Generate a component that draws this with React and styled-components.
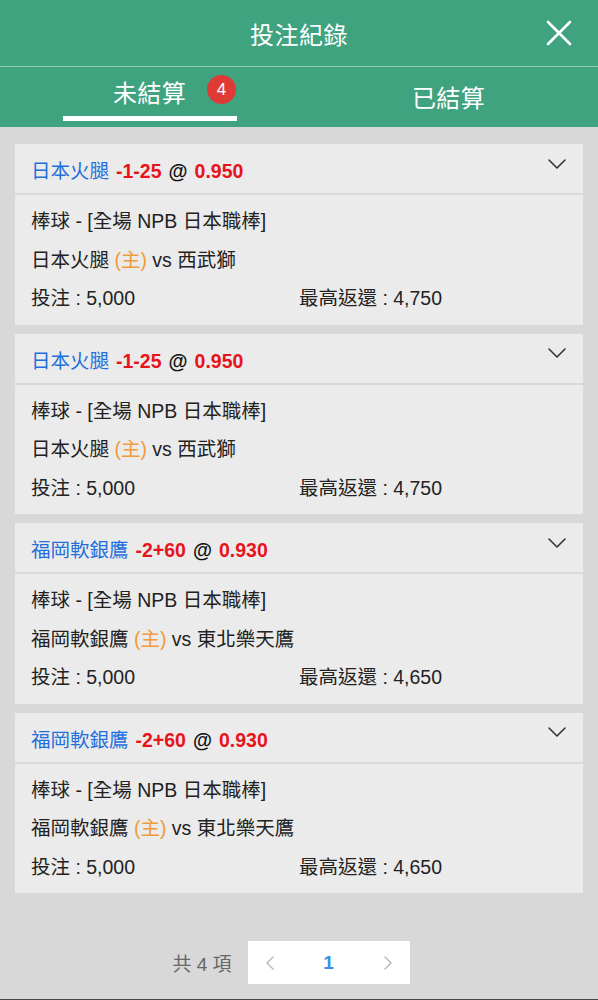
import React from "react";
import styled, { createGlobalStyle } from "styled-components";

const Global = createGlobalStyle`
  html, body { margin: 0; padding: 0; }
  body {
    font-family: "Liberation Sans", "Noto Sans CJK TC", Arial, sans-serif;
    background: #d8d8d8;
  }
  * { box-sizing: border-box; }
`;

const Page = styled.div`
  min-height: 1000px;
  display: flex;
  flex-direction: column;
  background: #d8d8d8;
`;

const TopBar = styled.header`
  background: #3fa37f;
`;

const TitleRow = styled.div`
  height: 67px;
  display: flex;
  align-items: center;
  justify-content: center;
  position: relative;
  border-bottom: 1px solid #93cbb5;
`;

const Title = styled.h1`
  margin: 0;
  color: #fff;
  font-size: 24px;
  font-weight: normal;
  letter-spacing: 0.5px;
`;

const CloseBtn = styled.button`
  position: absolute;
  right: 25px;
  top: 19px;
  width: 28px;
  height: 28px;
  padding: 0;
  border: 0;
  background: none;
  display: flex;
  align-items: center;
  justify-content: center;
`;

const Tabs = styled.nav`
  height: 60px;
  display: grid;
  grid-template-columns: 1fr 1fr;
`;

const Tab = styled.div`
  display: flex;
  flex-direction: column;
  align-items: center;
  padding-top: ${(p) => (p.$active ? "12px" : "17px")};
`;

const TabLabel = styled.span`
  position: relative;
  color: #fff;
  font-size: 24px;
  line-height: 30px;
  letter-spacing: 0.3px;
`;

const Badge = styled.span`
  position: absolute;
  left: calc(100% + 21px);
  top: -4px;
  width: 29px;
  height: 29px;
  border-radius: 50%;
  background: #df3a36;
  color: #fff;
  font-size: 17px;
  line-height: 29px;
  text-align: center;
  letter-spacing: 0;
`;

const Underline = styled.span`
  margin-top: 7px;
  width: 174px;
  height: 5px;
  background: #fff;
`;

const List = styled.main`
  padding: 17px 15px 0;
  display: flex;
  flex-direction: column;
  gap: 9px;
`;

const Card = styled.section`
  background: #ebebeb;
`;

const CardHead = styled.div`
  height: 51px;
  padding: 0 16px;
  display: flex;
  align-items: center;
  justify-content: space-between;
  border-bottom: 2px solid #d9d9d9;
  font-size: 19.5px;
`;

const HeadText = styled.div`
  display: flex;
  align-items: baseline;
  gap: 7px;
  padding-top: 2px;
`;

const Team = styled.span`
  color: #1f6fdc;
`;

const Odds = styled.span`
  color: #e8141b;
  font-weight: bold;
`;

const At = styled.span`
  color: #111;
  font-weight: bold;
`;

const Chevron = styled.span`
  display: flex;
  margin-top: -10px;
`;

const CardBody = styled.div`
  padding: 7px 16px 7px;
  color: #222;
  font-size: 19.5px;
  line-height: 38.5px;
`;

const Line = styled.div``;

const Home = styled.span`
  color: #f09a3a;
`;

const Amounts = styled.div`
  display: grid;
  grid-template-columns: 1fr 1fr;
`;

const Pager = styled.div`
  margin-top: 48px;
  display: flex;
  justify-content: center;
  align-items: center;
  gap: 16px;
  padding-right: 16px;
`;

const Total = styled.span`
  color: #666;
  font-size: 19px;
`;

const PagerBox = styled.div`
  width: 162px;
  height: 43px;
  background: #fff;
  display: flex;
  align-items: center;
  justify-content: space-between;
  padding: 0 17px 0 17px;
`;

const PageNum = styled.span`
  color: #3b8ee8;
  font-size: 19px;
  font-weight: bold;
`;

const Spacer = styled.div`
  flex: 1;
`;

const BottomBar = styled.div`
  height: 4px;
  background: #464646;
  margin-top: 15px;
`;

const bets = [
  { team: "日本火腿", line: "-1-25", odds: "0.950", away: "西武獅", ret: "4,750" },
  { team: "日本火腿", line: "-1-25", odds: "0.950", away: "西武獅", ret: "4,750" },
  { team: "福岡軟銀鷹", line: "-2+60", odds: "0.930", away: "東北樂天鷹", ret: "4,650" },
  { team: "福岡軟銀鷹", line: "-2+60", odds: "0.930", away: "東北樂天鷹", ret: "4,650" },
];

const ChevronDown = () => (
  <svg width="20" height="12" viewBox="0 0 20 12" fill="none">
    <path d="M2 2 L10 10 L18 2" stroke="#333" strokeWidth="1.6" strokeLinecap="round" strokeLinejoin="round" />
  </svg>
);

const Arrow = ({ dir }) => (
  <svg width="10" height="16" viewBox="0 0 10 16" fill="none">
    <path
      d={dir === "left" ? "M8 2 L2 8 L8 14" : "M2 2 L8 8 L2 14"}
      stroke="#b5b5b5"
      strokeWidth="1.4"
      strokeLinecap="round"
      strokeLinejoin="round"
    />
  </svg>
);

export default function App() {
  return (
    <Page>
      <Global />
      <TopBar>
        <TitleRow>
          <Title>投注紀錄</Title>
          <CloseBtn aria-label="close">
            <svg width="26" height="26" viewBox="0 0 26 26" fill="none">
              <path d="M2 2 L24 24 M24 2 L2 24" stroke="#fff" strokeWidth="2.6" strokeLinecap="round" />
            </svg>
          </CloseBtn>
        </TitleRow>
        <Tabs>
          <Tab $active>
            <TabLabel>
              未結算
              <Badge>4</Badge>
            </TabLabel>
            <Underline />
          </Tab>
          <Tab>
            <TabLabel>已結算</TabLabel>
          </Tab>
        </Tabs>
      </TopBar>
      <List>
        {bets.map((b, i) => (
          <Card key={i}>
            <CardHead>
              <HeadText>
                <Team>{b.team}</Team>
                <Odds>{b.line}</Odds>
                <At>@</At>
                <Odds>{b.odds}</Odds>
              </HeadText>
              <Chevron>
                <ChevronDown />
              </Chevron>
            </CardHead>
            <CardBody>
              <Line>棒球 - [全場 NPB 日本職棒]</Line>
              <Line>
                {b.team} <Home>(主)</Home> vs {b.away}
              </Line>
              <Amounts>
                <span>投注 : 5,000</span>
                <span>最高返還 : {b.ret}</span>
              </Amounts>
            </CardBody>
          </Card>
        ))}
      </List>
      <Pager>
        <Total>共 4 項</Total>
        <PagerBox>
          <Arrow dir="left" />
          <PageNum>1</PageNum>
          <Arrow dir="right" />
        </PagerBox>
      </Pager>
      <Spacer />
      <BottomBar />
    </Page>
  );
}
